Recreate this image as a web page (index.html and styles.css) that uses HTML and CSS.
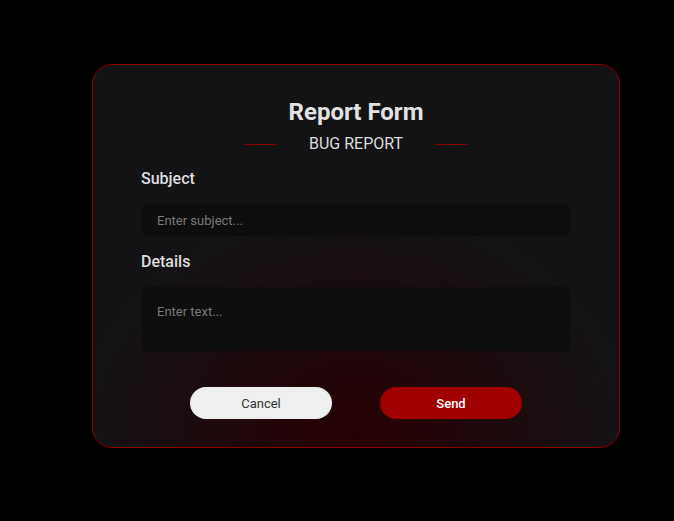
FILE: index.html
```html
<!DOCTYPE html>
<html lang="en">
<head>
  <meta charset="UTF-8">
  <meta name="viewport" content="width=device-width, initial-scale=1.0">
  <title>Report Form</title>
  <link rel="stylesheet" href="styles.css">
</head>
<body>
  <form class="report-card">
    <h1 class="report-title">Report Form</h1>
    <div class="report-type">
      <span class="report-line"></span>
      <span>BUG REPORT</span>
      <span class="report-line"></span>
    </div>

    <div class="field">
      <label for="subject">Subject</label>
      <input id="subject" type="text" placeholder="Enter subject...">
    </div>

    <div class="field">
      <label for="details">Details</label>
      <textarea id="details" placeholder="Enter text..."></textarea>
    </div>

    <div class="actions">
      <button type="button" class="btn btn-cancel">Cancel</button>
      <button type="submit" class="btn btn-send">Send</button>
    </div>
  </form>
</body>
</html>
```

FILE: styles.css
```css
body {
  font-family: Roboto, "Liberation Sans", sans-serif;
  margin: 0;
  padding: 64px 0 0 92px;
  background-color: #000;
}
.report-card {
  width: 528px;
  box-sizing: border-box;
  padding: 33px 48px 28px;
  border: 1px solid #8b0000;
  border-radius: 20px;
  background:
    radial-gradient(ellipse 280px 240px at 50% 100%, rgba(40, 0, 4, 1), rgba(40, 0, 4, 0)),
    #131316;
}
.report-title {
  margin: 0;
  font-size: 24px;
  line-height: 28px;
  font-weight: 700;
  color: #e2e2e2;
  text-align: center;
}
.report-type {
  display: flex;
  justify-content: center;
  align-items: center;
  gap: 32px;
  margin-top: 8px;
  font-size: 16px;
  line-height: 20px;
  color: #dcdcdc;
}
.report-line {
  width: 32px;
  height: 1px;
  background-color: #8f0000;
}
.field {
  margin-top: 15px;
}
.field + .field {
  margin-top: 16px;
}
.field label {
  display: block;
  margin-bottom: 15px;
  font-size: 16px;
  line-height: 20px;
  font-weight: 500;
  color: #dedede;
}
.field input,
.field textarea {
  display: block;
  width: 100%;
  box-sizing: border-box;
  border: none;
  border-radius: 6px;
  background-color: #0e0e0e;
  color: #ddd;
  font-family: inherit;
  font-size: 13px;
  outline: none;
}
.field input {
  height: 32px;
  padding: 0 16px;
}
.field textarea {
  height: 64px;
  padding: 17px 16px 11px;
  resize: none;
}
.field input::placeholder,
.field textarea::placeholder {
  color: #777;
}
.actions {
  display: flex;
  justify-content: center;
  gap: 48px;
  margin-top: 36px;
}
.btn {
  width: 142px;
  height: 32px;
  border: none;
  border-radius: 16px;
  font-family: inherit;
  font-size: 13px;
  cursor: pointer;
}
.btn-cancel {
  background-color: #efefef;
  color: #333;
}
.btn-send {
  background-color: #a00000;
  color: #fff;
  font-weight: 500;
}
```
